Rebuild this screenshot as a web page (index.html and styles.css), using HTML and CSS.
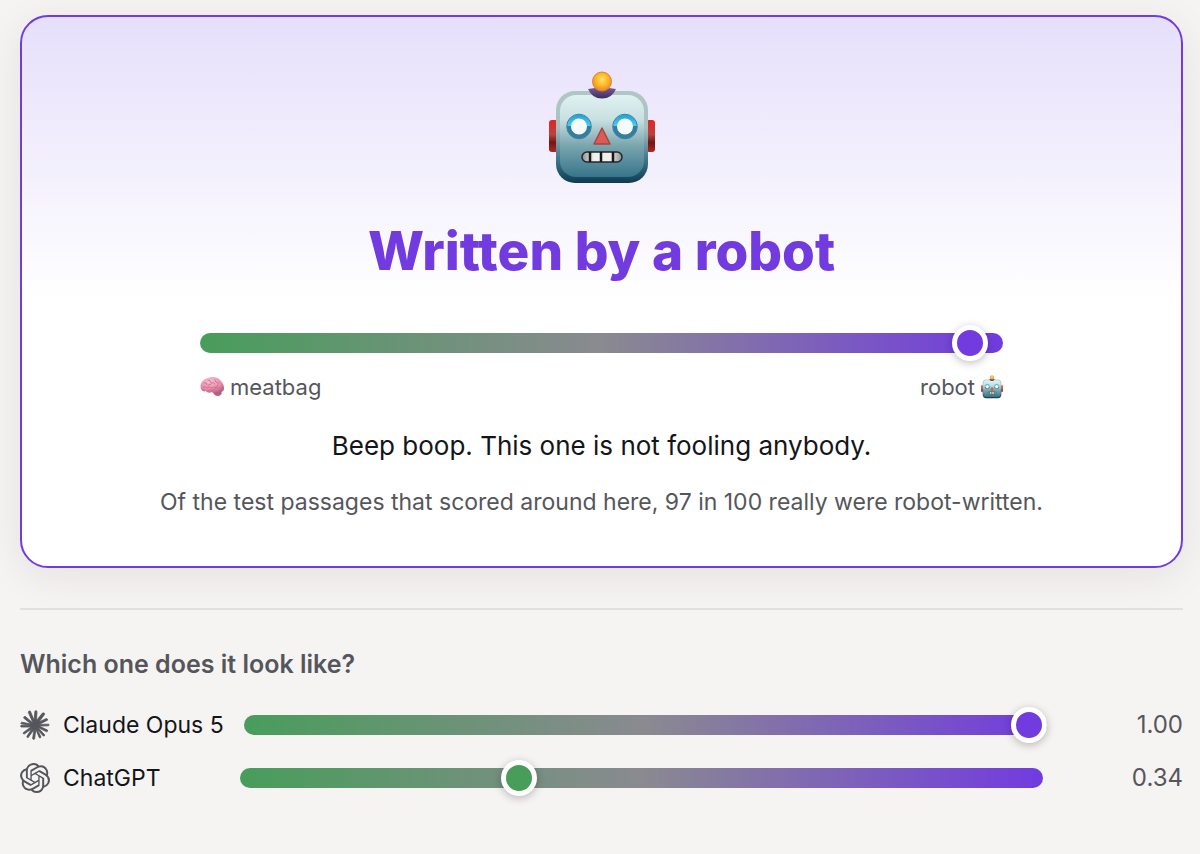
FILE: index.html
```html
<!DOCTYPE html>
<html lang="en">
<head>
<meta charset="utf-8">
<meta name="viewport" content="width=device-width, initial-scale=1">
<title>Written by a robot</title>
<link rel="stylesheet" href="styles.css">
</head>
<body>
<svg class="defs" aria-hidden="true">
  <defs>
    <linearGradient id="face" x1="0" y1="0" x2="0" y2="1">
      <stop offset="0" stop-color="#e0f2f2"/><stop offset=".3" stop-color="#c9dfe1"/><stop offset=".62" stop-color="#79a5ae"/><stop offset="1" stop-color="#38748a"/>
    </linearGradient>
    <linearGradient id="shell" x1="0" y1="0" x2="0" y2="1">
      <stop offset="0" stop-color="#b0c7c5"/><stop offset=".4" stop-color="#a7c1c3"/><stop offset=".7" stop-color="#4b7f90"/><stop offset=".94" stop-color="#164a60"/><stop offset="1" stop-color="#103a4e"/>
    </linearGradient>
    <linearGradient id="ear" x1="0" y1="0" x2="0" y2="1">
      <stop offset="0" stop-color="#e3241f"/><stop offset=".45" stop-color="#b8433f"/><stop offset=".7" stop-color="#701815"/><stop offset="1" stop-color="#b52420"/>
    </linearGradient>
    <radialGradient id="bulb" cx=".5" cy=".4" r=".6">
      <stop offset="0" stop-color="#ffe45c"/><stop offset=".55" stop-color="#fcb52b"/><stop offset="1" stop-color="#ec851b"/>
    </radialGradient>
    <linearGradient id="cap" x1="0" y1="0" x2="0" y2="1">
      <stop offset="0" stop-color="#7d5b9b"/><stop offset="1" stop-color="#3e2c5c"/>
    </linearGradient>
    <linearGradient id="eye" x1="0" y1="0" x2="0" y2="1">
      <stop offset="0" stop-color="#25a9dc"/><stop offset=".45" stop-color="#4ccbed"/><stop offset=".5" stop-color="#2c7fa5"/><stop offset="1" stop-color="#357e9e"/>
    </linearGradient>
    <linearGradient id="teeth" x1="0" y1="0" x2="1" y2="0">
      <stop offset="0" stop-color="#928f8b"/><stop offset=".3" stop-color="#f2f1ee"/><stop offset=".7" stop-color="#f2f1ee"/><stop offset="1" stop-color="#928f8b"/>
    </linearGradient>
    <radialGradient id="pink" cx=".4" cy=".25" r=".8">
      <stop offset="0" stop-color="#f8bfd0"/><stop offset=".6" stop-color="#e68fac"/><stop offset="1" stop-color="#b4577c"/>
    </radialGradient>
    <symbol id="robot" viewBox="0 0 108 114">
      <rect x="1" y="49" width="9" height="32" rx="3" fill="url(#ear)"/>
      <rect x="98" y="49" width="9" height="32" rx="3" fill="url(#ear)"/>
      <rect x="8" y="20" width="92" height="92" rx="19" fill="url(#shell)"/>
      <rect x="12" y="24" width="84" height="82" rx="16" fill="url(#face)"/>
      <path d="M40 18q14-3 28 0q-4 9.500-14 9.500t-14-9.500z" fill="url(#cap)"/>
      <circle cx="54" cy="10.500" r="9.500" fill="url(#bulb)" stroke="#db872a" stroke-width="1"/>
      <g fill="#f5fafd" stroke="url(#eye)" stroke-width="4">
        <circle cx="31" cy="55.500" r="10"/><circle cx="77" cy="55.500" r="10"/>
      </g>
      <g fill="none" stroke="#397f98" stroke-width="1">
        <circle cx="31" cy="55.500" r="12.300"/><circle cx="77" cy="55.500" r="12.300"/>
      </g>
      <path d="M54 57l8 16H46z" fill="#dc5b57" stroke="#a94440" stroke-width="1.5" stroke-linejoin="round"/>
      <rect x="34" y="81" width="40" height="10" rx="5" fill="url(#teeth)" stroke="#20282c" stroke-width="1.5"/>
      <path d="M42 81v10M53 81v10M65 81v10" stroke="#17191b" stroke-width="2.5"/>
    </symbol>
    <symbol id="brain" viewBox="0 0 24 20">
      <path d="M13 15c1 3 3 4 5 4s3-1 4-3l-3-3z" fill="#b75d81"/>
      <path d="M1 12C-1 7 3 2 8 1c5-2 10-.5 13 3 3 3 4 8 2 10-2 2-5 1-6 1-1 2-3 2-5 0-2 1-5 1-6-1-2 1-4 0-5-2z" fill="url(#pink)"/>
      <path d="M4 6q3-1 3 2M8 3q3 0 3 3 3-1 4 1M15 3q0 3 4 3M3 10q3-1 4 1 3-2 5 0 3-2 5 0 3-1 5 1M11 7q-3 0-3 2M18 8q0 2-2 2M8 14q1-2 4-1 3 0 4-2" fill="none" stroke="#c66a8d" stroke-width=".8" stroke-linecap="round"/>
    </symbol>
  </defs>
</svg>

<main class="page">
  <section class="card">
    <svg class="mascot" role="img" aria-label="Robot"><use href="#robot"/></svg>
    <h1 class="title">Written by a robot</h1>
    <div class="scale">
      <input class="slider" type="range" min="0" max="100" value="98" aria-label="Meatbag to robot score">
      <div class="scale-ends">
        <span class="end"><svg class="brain" aria-hidden="true"><use href="#brain"/></svg>meatbag</span>
        <span class="end">robot<svg class="mini-robot" aria-hidden="true"><use href="#robot"/></svg></span>
      </div>
    </div>
    <p class="verdict">Beep boop. This one is not fooling anybody.</p>
    <p class="detail">Of the test passages that scored around here, 97 in 100 really were robot-written.</p>
  </section>

  <section class="models">
    <h2 class="subtitle">Which one does it look like?</h2>
    <div class="row">
      <label class="name" for="claude">
        <svg class="logo" viewBox="0 0 30 30" aria-hidden="true">
          <path fill="currentColor" stroke="currentColor" stroke-width=".8" stroke-linejoin="round" d="M13 13L8.300 2.300Q8.600 .6 10.300 1.100L14 10L15 1Q16.200 .2 17 1.300L16.500 10.500L22.500 3Q24.500 2.400 24.700 4.200L19 12L26.300 8.500Q28 8.800 27.500 10.200L19 14.400L28.800 14.200Q29.600 15 28.600 15.800L19 16.100L27.600 20.100Q28 21.600 26.700 21.800L18 17.600L24.800 25Q24.600 26.400 23.300 26L17 19L21 27Q20.600 28.400 19.300 27.700L15.800 19.500L14.600 29Q13.400 30 12.600 28.700L14 19.500L8.200 27.500Q6.800 28 6.900 26.300L12 18.500L4.300 24Q2.800 24 3.200 22.700L11 17L1 17Q.2 16 1 15.300L10.500 15.200L1 13.800Q.5 12.700 1.700 12.200L11 14L3.700 8.100Q3.500 6.300 5.200 6.400Z"/>
        </svg>
        Claude Opus 5
      </label>
      <input class="slider" id="claude" type="range" min="0" max="1" step="0.01" value="1">
      <output class="value" for="claude">1.00</output>
    </div>
    <div class="row">
      <label class="name" for="chatgpt">
        <svg class="logo" viewBox="0 0 24 24" aria-hidden="true">
          <path fill="currentColor" d="M22.2819 9.8211a5.9847 5.9847 0 0 0-.5157-4.9108 6.0462 6.0462 0 0 0-6.5098-2.9A6.0651 6.0651 0 0 0 4.9807 4.1818a5.9847 5.9847 0 0 0-3.9977 2.9 6.0462 6.0462 0 0 0 .7427 7.0966 5.98 5.98 0 0 0 .511 4.9107 6.051 6.051 0 0 0 6.5146 2.9001A5.9847 5.9847 0 0 0 13.2599 24a6.0557 6.0557 0 0 0 5.7718-4.2058 5.9894 5.9894 0 0 0 3.9977-2.9001 6.0557 6.0557 0 0 0-.7475-7.0729zm-9.022 12.6081a4.4755 4.4755 0 0 1-2.8764-1.0408l.1419-.0804 4.7783-2.7582a.7948.7948 0 0 0 .3927-.6813v-6.7369l2.02 1.1686a.071.071 0 0 1 .038.052v5.5826a4.504 4.504 0 0 1-4.4945 4.4944zm-9.6607-4.1254a4.4708 4.4708 0 0 1-.5346-3.0137l.142.0852 4.783 2.7582a.7712.7712 0 0 0 .7806 0l5.8428-3.3685v2.3324a.0804.0804 0 0 1-.0332.0615L9.74 19.9502a4.4992 4.4992 0 0 1-6.1408-1.6464zM2.3408 7.8956a4.485 4.485 0 0 1 2.3655-1.9728V11.6a.7664.7664 0 0 0 .3879.6765l5.8144 3.3543-2.0201 1.1685a.0757.0757 0 0 1-.071 0l-4.8303-2.7865A4.504 4.504 0 0 1 2.3408 7.872zm16.5963 3.8558L13.1038 8.364 15.1192 7.2a.0757.0757 0 0 1 .071 0l4.8303 2.7913a4.4944 4.4944 0 0 1-.6765 8.1042v-5.6772a.79.79 0 0 0-.407-.667zm2.0107-3.0231l-.142-.0852-4.7735-2.7818a.7759.7759 0 0 0-.7854 0L9.409 9.2297V6.8974a.0662.0662 0 0 1 .0284-.0615l4.8303-2.7866a4.4992 4.4992 0 0 1 6.6802 4.66zM8.3065 12.863l-2.02-1.1638a.0804.0804 0 0 1-.038-.0567V6.0742a4.4992 4.4992 0 0 1 7.3757-3.4537l-.142.0805L8.704 5.459a.7948.7948 0 0 0-.3927.6813zm1.0976-2.3654l2.602-1.4998 2.6069 1.4998v2.9994l-2.5974 1.4997-2.6067-1.4997Z"/>
        </svg>
        ChatGPT
      </label>
      <input class="slider slider-green" id="chatgpt" type="range" min="0" max="1" step="0.01" value="0.34">
      <output class="value" for="chatgpt">0.34</output>
    </div>
  </section>
</main>
</body>
</html>
```
FILE: styles.css
```css
:root {
  --green: #489d5b;
  --violet: #713be0;
  --ink: #141519;
  --muted: #55565c;
}

* { box-sizing: border-box; }

body {
  margin: 0;
  background: #f5f4f2;
  color: var(--ink);
  font-family: Inter, "Liberation Sans", sans-serif;
  font-size: 24px;
  line-height: 32px;
}

.defs {
  position: absolute;
  width: 0;
  height: 0;
}

.page { padding: 15px 17px 40px 20px; }

.card {
  display: flex;
  flex-direction: column;
  align-items: center;
  padding: 54px 40px 48px;
  border: 2px solid var(--violet);
  border-radius: 28px;
  background: linear-gradient(#e6dffb, #fff 52%);
  box-shadow: 0 8px 40px rgba(20, 20, 30, 0.08);
  text-align: center;
}

.mascot {
  display: block;
  width: 108px;
  height: 114px;
}

.title {
  margin: 32px 0 40px;
  color: var(--violet);
  font-size: 53px;
  font-weight: 800;
  line-height: 68px;
}

.scale {
  width: 100%;
  max-width: 803px;
}

.slider {
  display: block;
  flex: 1;
  width: 100%;
  max-width: 803px;
  height: 36px;
  margin: 0;
  background: none;
  appearance: none;
}

.slider::-webkit-slider-runnable-track {
  height: 20px;
  border-radius: 10px;
  background: linear-gradient(90deg, var(--green), #8a8a90 50%, var(--violet));
}

.slider::-webkit-slider-thumb {
  width: 36px;
  height: 36px;
  margin-top: -8px;
  border: 5px solid #fff;
  border-radius: 50%;
  background: var(--violet);
  box-shadow: 0 2px 8px rgba(0, 0, 0, 0.25);
  appearance: none;
}

.slider-green::-webkit-slider-thumb { background: var(--green); }

.scale-ends {
  display: flex;
  justify-content: space-between;
  margin-top: 10px;
  color: var(--muted);
  font-size: 22px;
}

.end {
  display: flex;
  align-items: center;
  gap: 6px;
}

.brain {
  width: 24px;
  height: 20px;
}

.mini-robot {
  width: 22px;
  height: 24px;
}

.verdict {
  margin: 27px 0 24px;
  font-size: 26px;
}

.detail {
  margin: 0;
  color: var(--muted);
  font-size: 23px;
}

.models {
  display: flex;
  flex-direction: column;
  gap: 17px;
  margin-top: 40px;
  padding-top: 38px;
  border-top: 2px solid #e2e0de;
}

.subtitle {
  margin: 0 0 10px;
  color: var(--muted);
  font-size: 25px;
  font-weight: 600;
  line-height: 32px;
}

.row {
  display: flex;
  align-items: center;
  gap: 20px;
}

.name {
  display: flex;
  flex: none;
  align-items: center;
  gap: 13px;
  min-width: 200px;
  font-size: 23px;
}

.logo {
  width: 30px;
  height: 30px;
  color: var(--muted);
}

.value {
  margin-left: auto;
  color: var(--muted);
}
```
